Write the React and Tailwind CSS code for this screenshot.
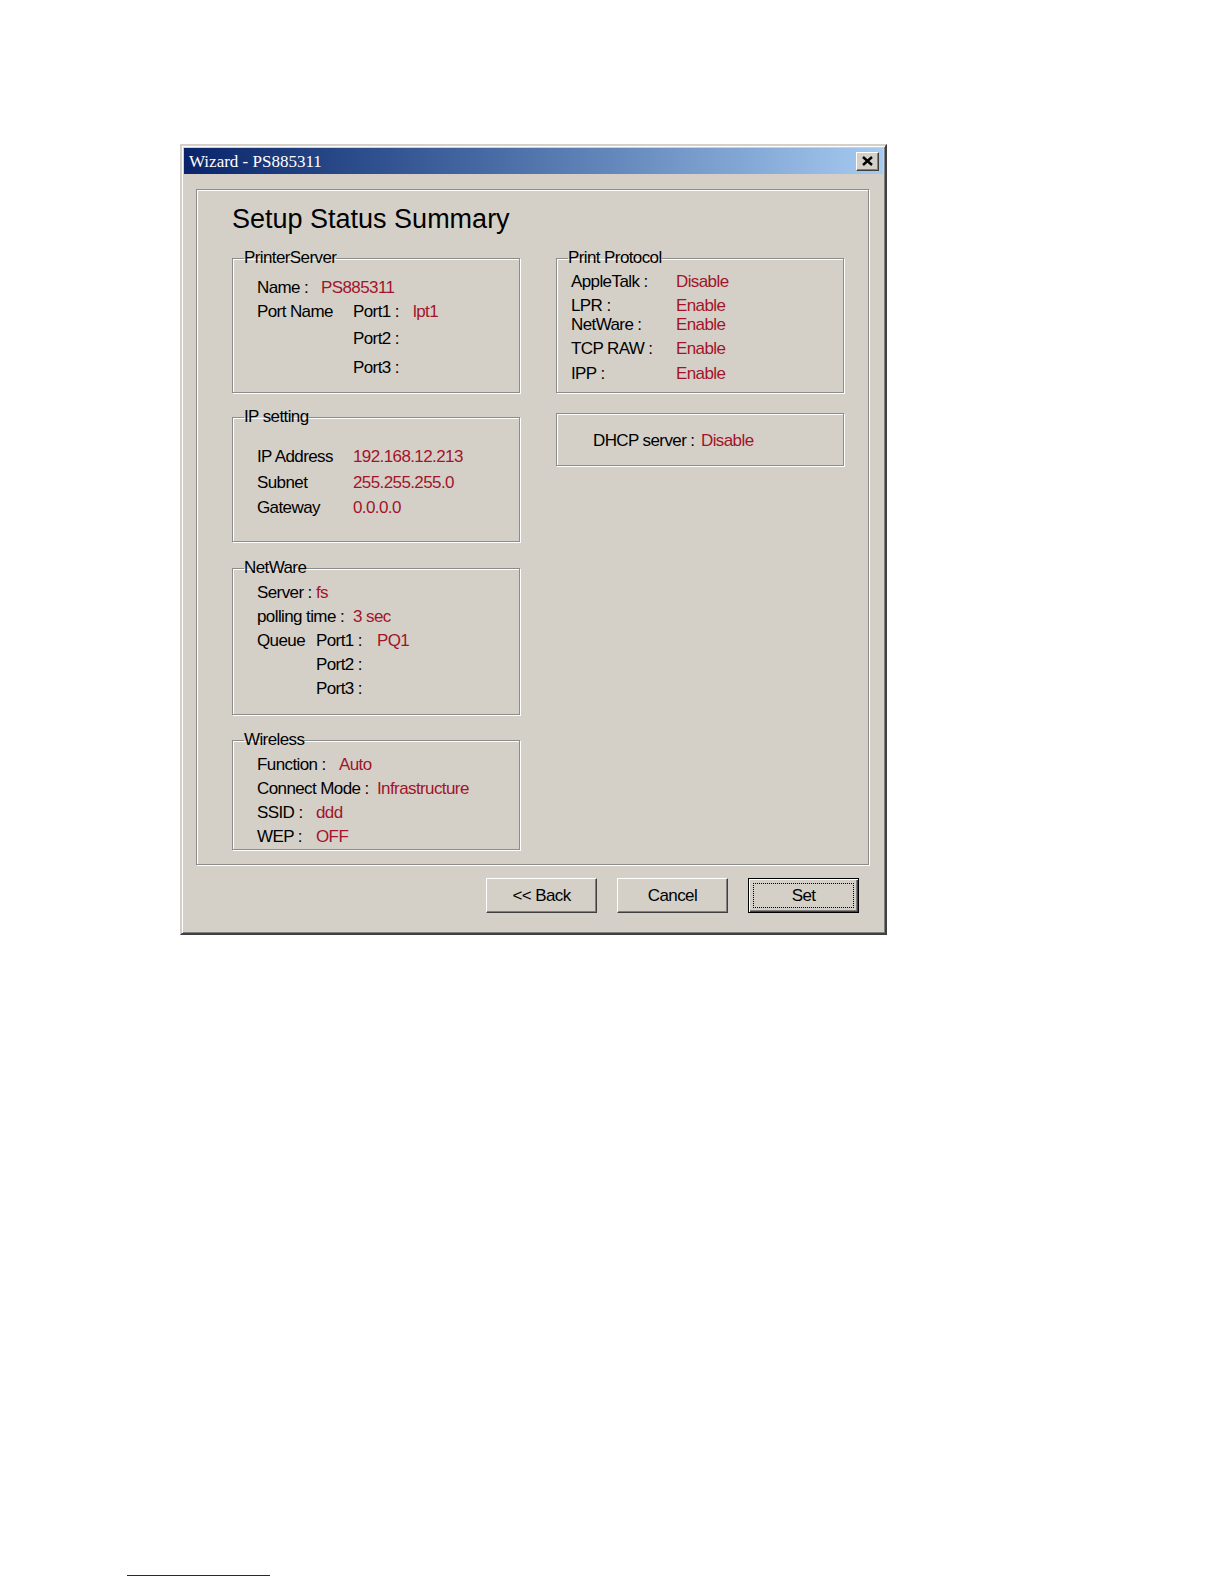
import React from 'react';

const red = 'text-[#a3142a]';

const Group = ({ title, className = '', children }) => (
  <fieldset className={`border border-[#8c8c8c] shadow-[1px_1px_0_#fff,inset_1px_1px_0_#fff] ${className}`}>
    <legend className="ml-[11px] leading-[20px]">{title}</legend>
    {children}
  </fieldset>
);

const Row = ({ className = '', children }) => (
  <div className={`flex whitespace-nowrap ${className}`}>{children}</div>
);

const Button = ({ label, isDefault }) => (
  <button
    className={
      isDefault
        ? 'w-[111px] h-[35px] border border-black bg-[#d4d0c8] p-[4px] shadow-[inset_1px_1px_0_#fff,inset_-1px_-1px_0_#404040,inset_-2px_-2px_0_#808080]'
        : 'w-[111px] h-[35px] border border-t-white border-l-white border-r-[#404040] border-b-[#404040] bg-[#d4d0c8] shadow-[inset_-1px_-1px_0_#808080]'
    }
  >
    {isDefault ? (
      <div className="h-full border border-dotted border-black flex items-center justify-center">{label}</div>
    ) : (
      label
    )}
  </button>
);

const App = () => {
  return (
    <div className="min-h-[1584px] bg-white pt-[144px] font-['Liberation_Sans',Arial,sans-serif] text-[17px] tracking-[-0.6px] text-black">
      <div className="ml-[180px] w-[707px] h-[791px] bg-[#d4d0c8] border-2 border-t-[#d4d0c8] border-l-[#d4d0c8] border-r-[#404040] border-b-[#404040] shadow-[inset_1px_1px_0_#fff,inset_-1px_-1px_0_#808080] p-[2px] flex flex-col">
        {/* title bar */}
        <div className="h-[26px] bg-gradient-to-r from-[#0a246a] to-[#a6caf0] flex items-center justify-between pl-[5px] pr-[4px]">
          <span className="font-['Liberation_Serif',serif] text-[17px] tracking-normal text-white leading-none">Wizard - PS885311</span>
          <div className="w-[23px] h-[19px] bg-[#d4d0c8] border border-t-white border-l-white border-r-[#404040] border-b-[#404040] shadow-[inset_-1px_-1px_0_#808080] flex items-center justify-center">
            <svg width="11" height="10" viewBox="0 0 11 10">
              <path d="M1 1 L10 9 M10 1 L1 9" stroke="#000" strokeWidth="2.4" />
            </svg>
          </div>
        </div>

        {/* summary panel */}
        <div className="mt-[15px] ml-[12px] w-[673px] h-[676px] border border-[#8c8c8c] shadow-[1px_1px_0_#fff,inset_1px_1px_0_#fff]">
          <h1 className="mt-[13px] pl-[35px] h-[32px] leading-[32px] text-[27px] tracking-normal">Setup Status Summary</h1>

          <div className="mt-[13px] pl-[35px] flex gap-[36px]">
            {/* left column */}
            <div className="w-[288px] flex flex-col">
              <Group title="PrinterServer" className="h-[145px]">
                <div className="pl-[24px] pt-[8px] leading-[24px]">
                  <Row>
                    <span className="w-[64px]">Name :</span>
                    <span className={red}>PS885311</span>
                  </Row>
                  <Row>
                    <span className="w-[96px]">Port Name</span>
                    <span className="w-[60px]">Port1 :</span>
                    <span className={red}>lpt1</span>
                  </Row>
                  <Row className="mt-[3px] pl-[96px]">Port2 :</Row>
                  <Row className="mt-[5px] pl-[96px]">Port3 :</Row>
                </div>
              </Group>

              <Group title="IP setting" className="mt-[14px] h-[135px]">
                <div className="pl-[24px] pt-[18px] leading-[24px]">
                  <Row>
                    <span className="w-[96px]">IP Address</span>
                    <span className={red}>192.168.12.213</span>
                  </Row>
                  <Row className="mt-[2px]">
                    <span className="w-[96px]">Subnet</span>
                    <span className={red}>255.255.255.0</span>
                  </Row>
                  <Row className="mt-[1px]">
                    <span className="w-[96px]">Gateway</span>
                    <span className={red}>0.0.0.0</span>
                  </Row>
                </div>
              </Group>

              <Group title="NetWare" className="mt-[16px] h-[157px]">
                <div className="pl-[24px] pt-[3px] leading-[24px]">
                  <Row>
                    <span className="w-[59px]">Server :</span>
                    <span className={red}>fs</span>
                  </Row>
                  <Row>
                    <span className="w-[96px]">polling time :</span>
                    <span className={red}>3 sec</span>
                  </Row>
                  <Row>
                    <span className="w-[59px]">Queue</span>
                    <span className="w-[61px]">Port1 :</span>
                    <span className={red}>PQ1</span>
                  </Row>
                  <Row className="pl-[59px]">Port2 :</Row>
                  <Row className="pl-[59px]">Port3 :</Row>
                </div>
              </Group>

              <Group title="Wireless" className="mt-[15px] h-[120px]">
                <div className="pl-[24px] pt-[3px] leading-[24px]">
                  <Row>
                    <span className="w-[82px]">Function :</span>
                    <span className={red}>Auto</span>
                  </Row>
                  <Row>
                    <span className="w-[120px]">Connect Mode :</span>
                    <span className={red}>Infrastructure</span>
                  </Row>
                  <Row>
                    <span className="w-[59px]">SSID :</span>
                    <span className={red}>ddd</span>
                  </Row>
                  <Row>
                    <span className="w-[59px]">WEP :</span>
                    <span className={red}>OFF</span>
                  </Row>
                </div>
              </Group>
            </div>

            {/* right column */}
            <div className="w-[288px] flex flex-col">
              <Group title="Print Protocol" className="h-[145px]">
                <div className="pl-[14px] pt-[5px] leading-[18px]">
                  <Row>
                    <span className="w-[105px]">AppleTalk :</span>
                    <span className={red}>Disable</span>
                  </Row>
                  <Row className="mt-[6px]">
                    <span className="w-[105px]">LPR :</span>
                    <span className={red}>Enable</span>
                  </Row>
                  <Row className="mt-[1px]">
                    <span className="w-[105px]">NetWare :</span>
                    <span className={red}>Enable</span>
                  </Row>
                  <Row className="mt-[6px]">
                    <span className="w-[105px]">TCP RAW :</span>
                    <span className={red}>Enable</span>
                  </Row>
                  <Row className="mt-[7px]">
                    <span className="w-[105px]">IPP :</span>
                    <span className={red}>Enable</span>
                  </Row>
                </div>
              </Group>

              <div className="mt-[20px] h-[53px] border border-[#8c8c8c] shadow-[1px_1px_0_#fff,inset_1px_1px_0_#fff] flex items-center pl-[36px] pt-[2px] whitespace-nowrap">
                <span className="w-[108px]">DHCP server :</span>
                <span className={red}>Disable</span>
              </div>
            </div>
          </div>
        </div>

        {/* buttons */}
        <div className="mt-[13px] mr-[24px] flex justify-end gap-[20px]">
          <Button label="<< Back" />
          <Button label="Cancel" />
          <Button label="Set" isDefault />
        </div>
      </div>

      <div className="mt-[640px] ml-[127px] w-[143px] h-[1px] bg-[#1c1c8c]" />
    </div>
  );
};

export default App;
